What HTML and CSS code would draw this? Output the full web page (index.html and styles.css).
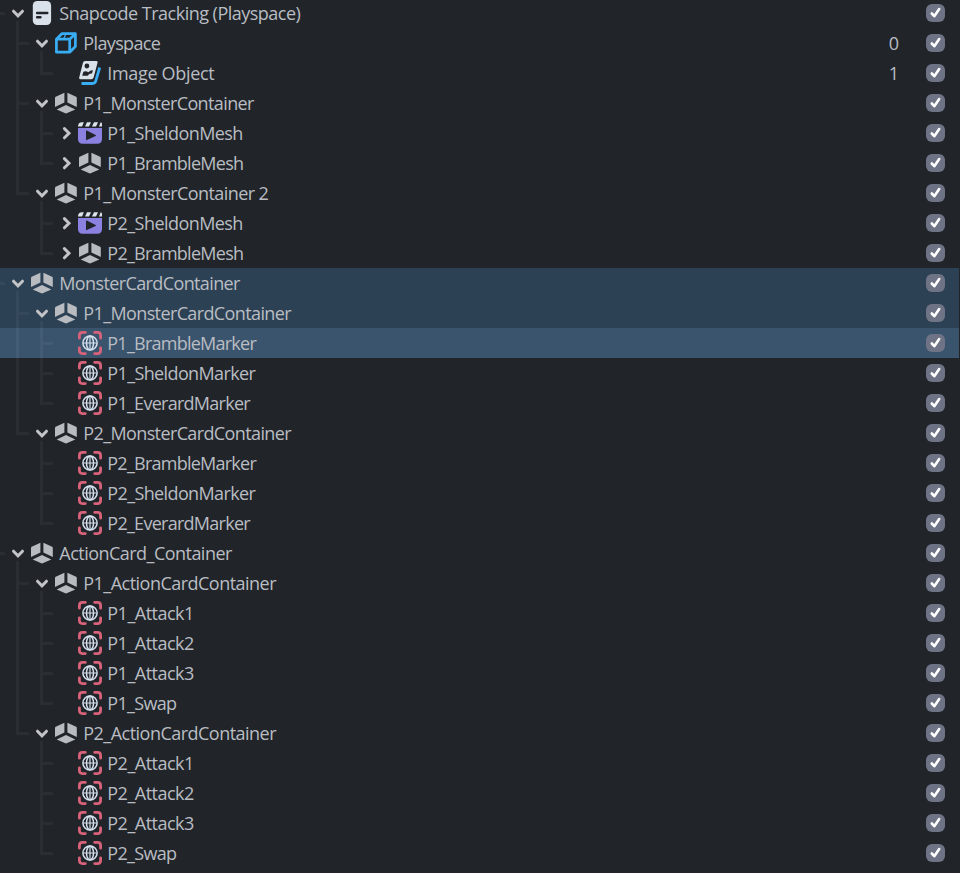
FILE: index.html
```html
<!DOCTYPE html>
<html lang="en">
<head>
<meta charset="utf-8">
<title>Scene hierarchy</title>
<link rel="stylesheet" href="styles.css">
</head>
<body>
<svg class="sprite" aria-hidden="true">
  <symbol id="down" viewBox="0 0 24 30"><path d="M7.5 13.200l4.5 4.600L16.5 13.200" fill="none" stroke="#c2c4c8" stroke-width="3" stroke-linecap="round" stroke-linejoin="miter"/></symbol>
  <symbol id="right" viewBox="0 0 24 30"><path d="M10.4 10.6L15 15.2l-4.6 4.6" fill="none" stroke="#c2c4c8" stroke-width="3" stroke-linecap="round"/></symbol>
  <symbol id="scene" viewBox="0 0 24 30"><rect x="2.800" y="3" width="18.300" height="24" rx="4.5" fill="#d9e1eb"/><path d="M7.200 15h10M7.200 19.300h3.200" stroke="#212429" stroke-width="2.6" stroke-linecap="round"/></symbol>
  <symbol id="cube" viewBox="0 0 24 30"><path d="M2.400 11.200H15.700v13H2.400zM2.400 11.200l5.400-5.500H21.400L15.700 11.200M21.400 5.700v12.800L15.700 24.200" fill="none" stroke="#39aef5" stroke-width="2.700" stroke-linejoin="round"/><path d="M12 5.700L9.500 11" stroke="#39aef5" stroke-width="1.200"/></symbol>
  <symbol id="image" viewBox="0 0 24 30"><path d="M7.2 3h11.3q1.5 0 1.1 1.5l-4 15q-.5 1.7-2.2 1.7H2.2Q.7 21.2 1.200 19.600L5 4.600Q5.500 3 7.200 3z" fill="#d9e1eb"/><circle cx="8.900" cy="8" r="2.400" fill="#212429"/><path d="M4.200 17.800l1.200-4q2.600-1.300 5 .5 2.300-2.500 4.500-2l-.9 3.200q-2.500-.5-4.400 2.300z" fill="#212429"/><path d="M3.500 25.500h11q2.500 0 3.200-2.300L21.700 9.500" fill="none" stroke="#39aef5" stroke-width="2.800"/></symbol>
  <symbol id="object" viewBox="0 0 24 30"><path d="M10.400 4.800v9.600L1 19V10q0-.8.700-1.200zM13.400 4.800l8.700 4q.7.400.7 1.200v9l-9.400-4.600zM12 16.900l9.300 4.500-8.600 3.900q-.7.300-1.400 0L2.700 21.400z" fill="#b8bbc0"/></symbol>
  <symbol id="clip" viewBox="0 0 24 30"><path d="M0 10h24v11q0 4.700-4.700 4.700H4.700Q0 25.700 0 21z" fill="#8b81e0"/><path d="M8 12.900v8.700q0 .8.800.5l8.800-4.200q.8-.5 0-1L8.800 12.600q-.8-.4-.8.300z" fill="#212429"/><path d="M0 8.600Q0 4.300 4.200 4.300h1.600L4.100 8.600zM9 4.300h4l-2 4.300H7zM16 4.300h4l-2 4.300h-4zM22.700 4.300q1.300 0 1.300 1.500v2.800h-3z" fill="#dce5ec"/></symbol>
  <symbol id="marker" viewBox="0 0 24 30"><path d="M1.400 10.200V7.400q0-3 3-3h2.900M16.700 4.400h2.900q3 0 3 3v2.800M22.600 19.800v2.800q0 3-3 3h-2.900M7.300 25.600H4.400q-3 0-3-3v-2.800" fill="none" stroke="#d8627a" stroke-width="2.800" stroke-linecap="round"/><g fill="none" stroke="#d5e0ee" stroke-width="1.500"><circle cx="12" cy="15" r="7.100"/><ellipse cx="12" cy="15" rx="3.500" ry="7"/><path d="M5 15h14M12 8v14" stroke-width="1.200"/></g></symbol>
  <symbol id="check" viewBox="0 0 19 18"><path d="M5.800 9.500l2.500 2.700 4.900-7.100" fill="none" stroke="#fff" stroke-width="2.600" stroke-linecap="round" stroke-linejoin="round"/></symbol>
</svg>
<main class="tree" id="tree"></main>
<script src="tree.js"></script>
</body>
</html>
```
FILE: styles.css
```css
body {
  margin: 0;
  height: 873px;
  overflow: hidden;
  background: #212429;
  color: #b9bdc3;
  font: 18px/30px "Open Sans", "Noto Sans", sans-serif;
}
.sprite { display: none; }
.tree {
  margin: -2px 1px 0 0;
}
.row {
  display: flex;
  height: 30px;
  padding: 0 14px 0 6px;
  position: relative;
}
.root::before {
  content: "";
  position: absolute;
  left: 0;
  top: 14px;
  width: 5px;
  height: 3px;
  background: rgba(255, 255, 255, .045);
}
.within { background: #2d4154; }
.selected { background: #3b546d; }
.cell, .icon {
  flex: none;
  width: 24px;
  height: 30px;
}
.cell { position: relative; }
.cell svg, .icon { display: block; width: 24px; height: 30px; }
.line::before, .stem::before {
  content: "";
  position: absolute;
  left: 10px;
  top: 0;
  width: 3px;
  height: 30px;
  background: rgba(255, 255, 255, .045);
}
.stem::before { top: 23px; height: 7px; }
.elbow::before { height: 17px; }
.branch::after {
  content: "";
  position: absolute;
  left: 13px;
  top: 14px;
  width: 10px;
  height: 3px;
  background: rgba(255, 255, 255, .045);
}
.label {
  flex: 1;
  padding-left: 5.300px;
  white-space: nowrap;
}
.count { margin-right: 27px; }
.check {
  width: 19px;
  height: 18px;
  margin-top: 6px;
  border-radius: 6px;
  background: #6e7385;
}
```
FILE: tree.js
```
// [depth, icon, name, toggle, labelWidth, count, state]
const rows = [
  [0, "scene", "Snapcode Tracking (Playspace)", "down", 241],
  [1, "cube", "Playspace", "down", 77, "0"],
  [2, "image", "Image Object", "", 107, "1"],
  [1, "object", "P1_MonsterContainer", "down", 170.5],
  [2, "clip", "P1_SheldonMesh", "right", 135.5],
  [2, "object", "P1_BrambleMesh", "right", 136],
  [1, "object", "P1_MonsterContainer 2", "down", 185],
  [2, "clip", "P2_SheldonMesh", "right", 135.5],
  [2, "object", "P2_BrambleMesh", "right", 136],
  [0, "object", "MonsterCardContainer", "down", 180.5, "", "within"],
  [1, "object", "P1_MonsterCardContainer", "down", 207.7, "", "within"],
  [2, "marker", "P1_BrambleMarker", "", 148.7, "", "selected"],
  [2, "marker", "P1_SheldonMarker", "", 148],
  [2, "marker", "P1_EverardMarker", "", 142.7],
  [1, "object", "P2_MonsterCardContainer", "down", 207.7],
  [2, "marker", "P2_BrambleMarker", "", 148.7],
  [2, "marker", "P2_SheldonMarker", "", 148],
  [2, "marker", "P2_EverardMarker", "", 142.7],
  [0, "object", "ActionCard_Container", "down", 172.5],
  [1, "object", "P1_ActionCardContainer", "down", 192.7],
  [2, "marker", "P1_Attack1", "", 86.5],
  [2, "marker", "P1_Attack2", "", 86.5],
  [2, "marker", "P1_Attack3", "", 86.5],
  [2, "marker", "P1_Swap", "", 69],
  [1, "object", "P2_ActionCardContainer", "down", 192.7],
  [2, "marker", "P2_Attack1", "", 86.5],
  [2, "marker", "P2_Attack2", "", 86.5],
  [2, "marker", "P2_Attack3", "", 86.5],
  [2, "marker", "P2_Swap", "", 69]
];

const tree = document.getElementById("tree");
const use = (id, cls) => `<svg class="${cls}"><use href="#${id}"/></svg>`;

// True when a later sibling exists at this depth under the same parent.
function continues(index, depth) {
  for (let i = index + 1; i < rows.length; i++) {
    if (rows[i][0] === depth) return true;
    if (rows[i][0] < depth) return false;
  }
  return false;
}

rows.forEach(([depth, icon, name, toggle, width, count, state], index) => {
  let html = "";
  for (let d = 0; d < depth; d++) {
    const more = continues(index, d + 1);
    const direct = d === depth - 1;
    const line = more ? "line" : direct ? "line elbow" : "";
    html += `<span class="cell ${line} ${direct ? "branch" : ""}"></span>`;
  }
  html += `<span class="cell ${toggle === "down" ? "stem" : ""}">${toggle ? use(toggle, "") : ""}</span>`;
  html += use(icon, "icon");
  html += `<span class="label"><span class="name">${name}</span></span>`;
  if (count) html += `<span class="count">${count}</span>`;
  html += use("check", "check");
  const row = document.createElement("div");
  row.className = `row ${depth ? "" : "root"} ${state || ""}`;
  row.innerHTML = html;
  tree.append(row);
  const text = row.querySelector(".name");
  const spacing = (width - text.getBoundingClientRect().width) / name.length;
  text.style.letterSpacing = `${spacing.toFixed(3)}px`;
});
```
